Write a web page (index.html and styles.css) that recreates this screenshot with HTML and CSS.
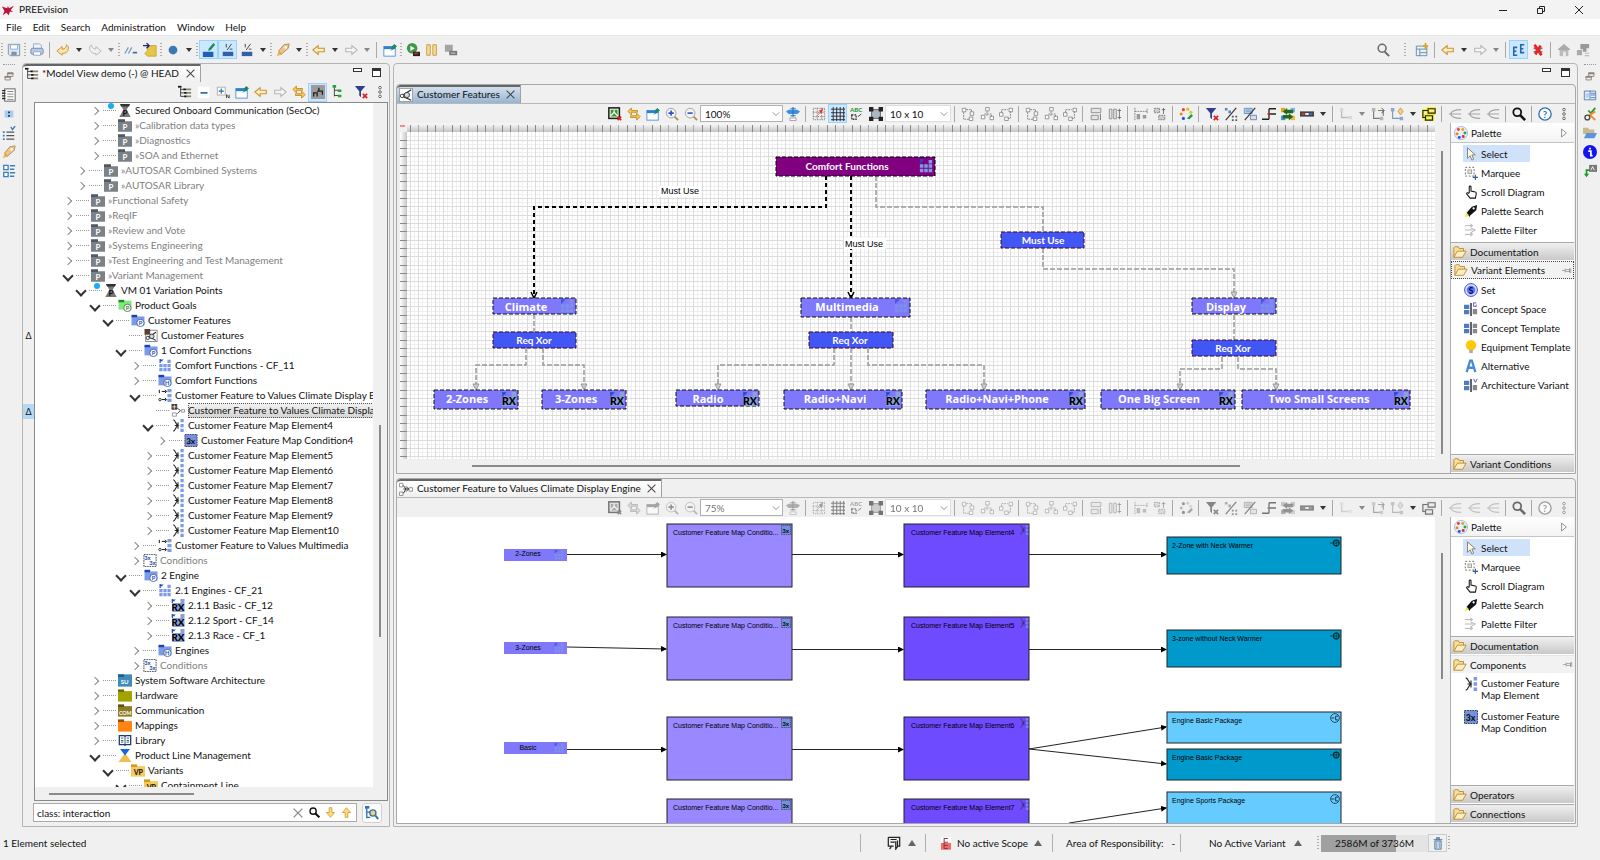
FILE: index.html
```html
<!DOCTYPE html>
<html lang="en">
<head>
    <meta charset="UTF-8">
    <meta name="viewport" content="width=device-width, initial-scale=1.0">
    <title>PREEvision</title>
    <link rel="stylesheet" href="styles.css">
</head>
<body>
    <!-- Icon sprite -->
    <svg class="sprite" aria-hidden="true">
        <symbol id="logo" viewBox="0 0 16 16"><path d="M1 4l6 2 1-3 1 3 6-3-4 5 3 2-4 0-1 4-3-3-4 3 2-5z" fill="#b8143c"/></symbol>
        <symbol id="save" viewBox="0 0 16 16"><path d="M1.5 1.5h13v13h-11l-2-2z" fill="#dbe7f2" stroke="#6f8fae"/><path d="M4 2h8v5H4z" fill="#fff" stroke="#8aa6c0"/><path d="M5 10h6v4H5z" fill="#7d93a8"/></symbol>
        <symbol id="print" viewBox="0 0 16 16"><path d="M4 1h7l2 2v4H4z" fill="#eef4fb" stroke="#8ba2c4"/><rect x="1" y="6" width="14" height="7" rx="2" fill="#b9cbe3" stroke="#6c86ad"/><path d="M4 10h8v4H4z" fill="#fff" stroke="#8ba2c4"/></symbol>
        <symbol id="undo" viewBox="0 0 16 16"><path d="M1 9l6-5v3c3 0 5-2 5-5l2 2c1 5-2 8-7 8v2z" fill="#fbe3ae" stroke="#c98a2b"/></symbol>
        <symbol id="redo" viewBox="0 0 16 16"><path d="M15 9L9 4v3C6 7 4 5 4 2L2 4c-1 5 2 8 7 8v2z" fill="#f1f1f1" stroke="#b3b3b3"/></symbol>
        <symbol id="slashes" viewBox="0 0 16 16"><path d="M1 12l4-7M5 12l4-7" stroke="#7d9cc0" stroke-width="1.5"/><path d="M10 11h5" stroke="#3c6fae" stroke-width="2"/></symbol>
        <symbol id="import" viewBox="0 0 16 16"><path d="M5 3h10v12H5l-3-3 3-3z" fill="#e3c64a" stroke="#c8a62b"/><path d="M0 3h6M4 0l3 3-3 3" stroke="#23238c" stroke-width="1.5" fill="none"/></symbol>
        <symbol id="dot" viewBox="0 0 16 16"><circle cx="8" cy="8" r="5" fill="#3b78b5"/></symbol>
        <symbol id="pen" viewBox="0 0 16 16"><rect x="1" y="10" width="12" height="6" fill="#1f5fb8"/><path d="M7 9l1-3 5-6 2 2-5 6z" fill="#1d8a62"/></symbol>
        <symbol id="frac" viewBox="0 0 16 16"><rect x="2" y="10" width="12" height="5" fill="#2f62ab"/><path d="M6 1v4M12 1L7 8M10 7h3" stroke="#333"/></symbol>
        <symbol id="rocket" viewBox="0 0 16 16"><path d="M1 15l2-6 3 4z" fill="#f2b24c"/><path d="M3 9l6-7 6-1-1 5-8 7z" fill="#e9c48b" stroke="#b58a4a"/><circle cx="11" cy="5" r="1.5" fill="#fff"/></symbol>
        <symbol id="back" viewBox="0 0 16 16"><path d="M1 8l6-5v3h7v4H7v3z" fill="#fdf0c8" stroke="#cc9430" stroke-width="1.3"/></symbol>
        <symbol id="fwd" viewBox="0 0 16 16"><path d="M15 8L9 3v3H2v4h7v3z" fill="#f7f7f7" stroke="#b5b5b5" stroke-width="1.2"/></symbol>
        <symbol id="pinwin" viewBox="0 0 16 16"><rect x="1" y="4" width="13" height="11" fill="#fff" stroke="#4b8fd0"/><path d="M1 4h13v3H1z" fill="#2c7fd4"/><path d="M8 9l3-3-1-2 3-3 3 3-3 2-1 1z" fill="#1c8a5c"/></symbol>
        <symbol id="run" viewBox="0 0 16 16"><circle cx="7" cy="6" r="6" fill="#3c9a46"/><path d="M5 3l5 3-5 3z" fill="#fff"/><rect x="8" y="10" width="8" height="5" fill="#222"/><rect x="9" y="11" width="5" height="2" fill="#c62828"/></symbol>
        <symbol id="pause" viewBox="0 0 16 16"><path d="M2 2h4v12H2zM9 2h4v12H9z" fill="#f7dc96" stroke="#c79632"/></symbol>
        <symbol id="stop" viewBox="0 0 16 16"><rect x="1" y="2" width="9" height="8" fill="#a3a3a3"/><rect x="6" y="9" width="9" height="5" fill="#777"/><rect x="8" y="11" width="5" height="1" fill="#ddd"/></symbol>
        <symbol id="search" viewBox="0 0 16 16"><circle cx="7" cy="6" r="4.5" fill="none" stroke="#6b6b6b" stroke-width="1.8"/><path d="M10 10l5 5" stroke="#6b6b6b" stroke-width="2.2"/></symbol>
        <symbol id="find" viewBox="0 0 16 16"><circle cx="6" cy="6" r="4.5" fill="none" stroke="#111" stroke-width="2"/><path d="M9 9l6 6" stroke="#111" stroke-width="3"/></symbol>
        <symbol id="persp" viewBox="0 0 16 16"><path d="M1.5 3.5h12v11h-12zM1.5 7h12M5.5 7v8M5.5 11h8" fill="#e9f1f8" stroke="#5f87a8"/><path d="M12 0v7M9 3.500h6" stroke="#dca32a" stroke-width="2"/></symbol>
        <symbol id="ee" viewBox="0 0 16 16"><path d="M6 5H2v9h4M2 9.500h3M14 2h-4v9h4M10 6.500h3" fill="none" stroke="#2467b0" stroke-width="1.800"/></symbol>
        <symbol id="nox" viewBox="0 0 16 16"><path d="M3 6h10M3 10h10M6 3v10M10 3v10" stroke="#777" stroke-width="2"/><path d="M4 2l8 12M11 3L5 13" stroke="#f02020" stroke-width="3"/></symbol>
        <symbol id="home" viewBox="0 0 16 16"><path d="M1 7l7-6 7 6v1H1z" fill="#aaa"/><path d="M3 8h10v7H3z" fill="#bbb"/><path d="M7 10h3v5H7z" fill="#eee"/></symbol>
        <symbol id="blocks" viewBox="0 0 16 16"><path d="M5 1h10v5h-3v4H8V7H5z" fill="#999"/><path d="M1 8h6v6H1zM10 11h5v1h-5zM10 14h5v1h-5z" fill="#aaa"/></symbol>
        <symbol id="restore" viewBox="0 0 16 16"><path d="M6.500 4.500h6v4h-6zM3.500 8.500h6v4h-6z" fill="#eee" stroke="#8a8278"/><path d="M6 4h7v2H6zM3 8h7v2H3z" fill="#8a8278"/></symbol>
        <symbol id="notes" viewBox="0 0 16 16"><rect x="3" y="1" width="12" height="14" fill="#fff" stroke="#555"/><path d="M6 4h7M6 7h7M6 10h7M6 13h7" stroke="#777"/><path d="M0 3h4M0 6h4M0 9h4M0 12h4" stroke="#333" stroke-width="1.5"/></symbol>
        <symbol id="pair" viewBox="0 0 16 16"><path d="M3 4h10v8H3z" fill="#a9cdf0"/><path d="M7 5h2v2H7zM7 9h2v2H7z" fill="#234"/></symbol>
        <symbol id="checks" viewBox="0 0 16 16"><path d="M1 6h2v2H1zM1 10h2v2H1zM1 14h2v2H1z" fill="#367ac2"/><path d="M5 7h9M5 11h9M5 15h9" stroke="#555" stroke-width="1.5"/><path d="M10 1l2 3 3-4" fill="none" stroke="#367ac2" stroke-width="1.5"/></symbol>
        <symbol id="props" viewBox="0 0 16 16"><path d="M2 1.500h5v5H2zM2 9.500h5v5H2z" fill="#fff" stroke="#3a7fbf" stroke-width="1.5"/><path d="M9 2h6M9 6h5M9 10h6M9 14h5" stroke="#3a7fbf" stroke-width="1.5"/></symbol>
        <symbol id="table" viewBox="0 0 16 16"><path d="M1.500 3.500h13v10h-13zM8 3v10" fill="#e8f0fa" stroke="#5177b2"/><path d="M3 6h4v5H3z" fill="#b9cdea"/><path d="M9 6h5M9 8h5M9 11h5" stroke="#5177b2"/></symbol>
        <symbol id="verify" viewBox="0 0 16 16"><path d="M6 4l3 3 5-6" fill="none" stroke="#1d9b3a" stroke-width="2"/><path d="M14 5L8 9l6 6" fill="none" stroke="#f08a24" stroke-width="2.200"/><circle cx="5" cy="12" r="2.800" fill="none" stroke="#444" stroke-width="1.5"/></symbol>
        <symbol id="files" viewBox="0 0 16 16"><path d="M0 2h6l1 2h6v5H0z" fill="#c9b98c"/><path d="M4 8h12l-3 6H1z" fill="#5b93dd"/></symbol>
        <symbol id="info" viewBox="0 0 16 16"><circle cx="8" cy="8" r="8" fill="#1414f0"/><path d="M6 7h3v5h2M8 3v2" fill="none" stroke="#fff" stroke-width="2"/></symbol>
        <symbol id="trace" viewBox="0 0 16 16"><rect x="7" y="1" width="9" height="8" fill="#777"/><path d="M9 7l2-4 2 4" stroke="#fff" fill="none"/><path d="M8 7H4v5" fill="none" stroke="#1c9a2c" stroke-width="2"/><path d="M1 11h6l-3 4z" fill="#1c9a2c"/></symbol>
        <symbol id="hier" viewBox="0 0 16 16"><path d="M0 1h4v2H0z" fill="#111"/><path d="M3 3v10M3 5h3M3 9h4M3 13h4" fill="none" stroke="#333"/><path d="M6 4h3v2H6zM7 8h3v2H7zM7 12h3v2H7z" fill="#111"/><path d="M9 5h6M10 9h5M10 13h5" stroke="#8a8470" stroke-width="2"/></symbol>
        <symbol id="collapse" viewBox="0 0 16 16"><rect x="1" y="2" width="13" height="13" fill="#fff"/><path d="M4 9h8" stroke="#2b6fa8" stroke-width="2"/></symbol>
        <symbol id="expand" viewBox="0 0 16 16"><rect x="1.5" y="2.5" width="9" height="9" fill="#fff" stroke="#aaa"/><path d="M3 7h6M6 4v6" stroke="#2b6fa8" stroke-width="1.3"/><path d="M12 15v-4l3 4v-4" fill="none" stroke="#333"/></symbol>
        <symbol id="sync" viewBox="0 0 16 16"><path d="M1 5l4-4v3h7v2H5v3z" fill="#f6c85e" stroke="#c48a22"/><path d="M15 11l-4-4v3H4v2h7v3z" fill="#f6c85e" stroke="#c48a22"/></symbol>
        <symbol id="flat" viewBox="0 0 16 16"><rect width="16" height="16" fill="#9b9b9b"/><path d="M3 13V9h4v4M9 7V3M7 7h6v4" fill="none" stroke="#222" stroke-width="1.5"/></symbol>
        <symbol id="greentree" viewBox="0 0 16 16"><path d="M5 2v11M5 6h5M5 12h5" fill="none" stroke="#333"/><path d="M3 0h4v3H3zM9 5h4v3H9zM9 11h4v3H9z" fill="#20a838"/></symbol>
        <symbol id="filter" viewBox="0 0 16 16"><path d="M1 1h12L8 7v7l-2-2V7z" fill="#2e3f8f"/><path d="M10 10l5 5M15 10l-5 5" stroke="#e21b1b" stroke-width="2"/></symbol>
        <symbol id="kebab" viewBox="0 0 16 16"><g fill="#fff" stroke="#555"><circle cx="8" cy="3" r="1.5"/><circle cx="8" cy="8" r="1.5"/><circle cx="8" cy="13" r="1.5"/></g></symbol>
        <symbol id="export" viewBox="0 0 16 16"><rect x="1" y="1" width="12" height="12" fill="#fff" stroke="#222" stroke-width="1.800"/><path d="M3 3h8v8H3z" fill="#3c9a30"/><path d="M3 10l4-4 4 4M7 3v3" fill="none" stroke="#fff" stroke-width="1.300"/><path d="M11 11l4 4M15 11l-4 4" stroke="#e21b1b" stroke-width="1.800"/></symbol>
        <symbol id="zin" viewBox="0 0 16 16"><circle cx="7" cy="7" r="5.5" fill="#f0f4fb" stroke="#9a9a9a"/><path d="M4 7h6M7 4v6" stroke="#2f50c0" stroke-width="1.8"/><path d="M11 11l4 4" stroke="#b0885a" stroke-width="2"/></symbol>
        <symbol id="zout" viewBox="0 0 16 16"><circle cx="7" cy="7" r="5.5" fill="#f0f4fb" stroke="#9a9a9a"/><path d="M4 7h6" stroke="#2f50c0" stroke-width="1.8"/><path d="M11 11l4 4" stroke="#b0885a" stroke-width="2"/></symbol>
        <symbol id="fit" viewBox="0 0 16 16"><path d="M0 5l3-2h10l3 2-3 3H3z" fill="#3f8fdd"/><path d="M8 0v11M5 2h6M5 10h6" stroke="#2c72c0" stroke-width="1.3"/><path d="M4.500 12.500h7v3h-7z" fill="#fff" stroke="#999"/></symbol>
        <symbol id="snap" viewBox="0 0 16 16"><path d="M1.500 1.500h13v13h-13zM6 1v14M11 1v14M1 6h14M1 11h14" fill="none" stroke="#666" stroke-dasharray="1 1"/><path d="M4 12l5-6-1-2 5-2-2 5-2 0z" fill="#ee3a2a"/></symbol>
        <symbol id="gridic" viewBox="0 0 16 16"><path d="M2.500 0v16M6.500 0v16M10.500 0v16M14.500 0v16M0 2.500h16M0 6.500h16M0 10.500h16M0 14.500h16" stroke="#222"/></symbol>
        <symbol id="abc" viewBox="0 0 16 16"><text x="0" y="6" font-size="7" font-weight="700" fill="#18902a">ABC</text><path d="M2 9h5v5H2z" fill="none" stroke="#333" stroke-width="1.5" stroke-dasharray="2 1"/><path d="M9 11l4-3" stroke="#333"/></symbol>
        <symbol id="resize" viewBox="0 0 16 16"><path d="M3 3h10v10H3z" fill="#aab8c4" stroke="#555"/><path d="M0 0h5v5H0zM11 0h5v5h-5zM0 11h5v5H0zM11 11h5v5h-5z" fill="#222"/></symbol>
        <symbol id="al1" viewBox="0 0 16 16"><path d="M1.500 1.500h4v4h-4zM10.500 5.500h4v4h-4zM9.500 11.500h4v4h-4z" fill="#fff" stroke="#888"/><path d="M3 6v8h6M6 3h6v3" fill="none" stroke="#777" stroke-dasharray="2 1"/></symbol>
        <symbol id="al2" viewBox="0 0 16 16"><path d="M6.500 .5h4v4h-4zM1.500 9.500h4v4h-4zM11.500 10.500h4v4h-4z" fill="#fff" stroke="#888"/><path d="M8 5v6M5 8h8v3" fill="none" stroke="#777" stroke-dasharray="2 1"/></symbol>
        <symbol id="al3" viewBox="0 0 16 16"><path d="M11.500 1.500h4v4h-4zM.5 6.500h4v4h-4zM6.500 11.500h4v4h-4z" fill="#fff" stroke="#888"/><path d="M13 5v8h-3M3 6V3h7" fill="none" stroke="#777" stroke-dasharray="2 1"/></symbol>
        <symbol id="rows" viewBox="0 0 16 16"><path d="M2.500 1.500h11v5h-11zM2.500 9.500h8v5h-8z" fill="#e4e4e4" stroke="#888"/><path d="M13 8v7" stroke="#666"/></symbol>
        <symbol id="cols" viewBox="0 0 16 16"><path d="M1.500 2.500h3v11h-3zM6.500 2.500h3v11h-3z" fill="#e4e4e4" stroke="#888"/><path d="M13 2v12M11 4h4M11 12h4" stroke="#666"/></symbol>
        <symbol id="sizeh" viewBox="0 0 16 16"><path d="M1 1v14M1 5h14M15 2v6" fill="none" stroke="#777" stroke-dasharray="2 1"/><path d="M3 8h4v6H3zM10 9h4v4h-4z" fill="#999"/></symbol>
        <symbol id="sizev" viewBox="0 0 16 16"><path d="M1.500 1.500h6v5h-6zM6.500 9.500h7v5h-7z" fill="#ccc" stroke="#777" stroke-dasharray="2 1"/><path d="M12 1v7M10 3h4" stroke="#666"/></symbol>
        <symbol id="colors" viewBox="0 0 16 16"><circle cx="5" cy="3" r="1.8" fill="#e8442c"/><circle cx="10" cy="2.5" r="1.8" fill="#f3b71e"/><circle cx="2.5" cy="8" r="1.8" fill="#f08a1d"/><circle cx="5" cy="13" r="1.8" fill="#2b50d8"/><circle cx="13.5" cy="6" r="1.8" fill="#c8d422"/><path d="M9 13l5-5 2 2-4 4z" fill="#1b9b50"/></symbol>
        <symbol id="pct" viewBox="0 0 16 16"><path d="M2 15L14 1" stroke="#333" stroke-width="1.3"/><path d="M1 1h3v3H1zM5 4h3v3H5z" fill="#5d82c0"/><path d="M9 10h2v2H9zM13 10h2v2h-2zM9 14h2v2H9zM13 14h2v2h-2z" fill="#555"/></symbol>
        <symbol id="pct2" viewBox="0 0 16 16"><path d="M1.500 1.500h9v6h-9zM3 3.500h6M3 5.500h6" fill="#cfe0f6" stroke="#5d82c0"/><path d="M8.500 9.500h7v5h-7z" fill="#ddd" stroke="#5d82c0"/><path d="M2 15L14 1" stroke="#333" stroke-width="1.3"/></symbol>
        <symbol id="branch" viewBox="0 0 16 16"><path d="M8 2h8M8 2v12M0 14h8M8 8h8" fill="none" stroke="#222" stroke-width="1.5"/><path d="M6 8h4" stroke="#e22" stroke-width="1.5"/></symbol>
        <symbol id="swap" viewBox="0 0 16 16"><path d="M0 1h5v5H0z" fill="#e8a31c"/><path d="M11 1h5v5h-5z" fill="#7bb7ea"/><path d="M0 10h5v5H0z" fill="#4a8fd6"/><path d="M11 10h5v5h-5z" fill="#f0b93a"/><path d="M2 5l5-4v2h7v4H7v2zM14 11l-5 4v-2H2V9h7V7z" fill="#1f6b1f"/></symbol>
        <symbol id="ruler3" viewBox="0 0 16 16"><path d="M0 5h16v6H0z" fill="#444"/><path d="M2 7h3v2H2z" fill="#e33"/><path d="M6 7h4v2H6z" fill="#fff"/><path d="M11 7h3v2h-3z" fill="#3a6fd8"/></symbol>
        <symbol id="route" viewBox="0 0 16 16"><path d="M3 3v9h8" fill="none" stroke="#bbb" stroke-width="1.5"/><path d="M1 1h4v4H1zM11 10h4v4h-4z" fill="#d3d9e0"/></symbol>
        <symbol id="route2" viewBox="0 0 16 16"><path d="M3 3v10h7M8 4h6v6" fill="none" stroke="#777" stroke-width="1.3"/><path d="M1 1h4v4H1zM10 11h4v4h-4z" fill="#b5b5b5"/><path d="M12 1l3 3-3 3" fill="none" stroke="#444"/></symbol>
        <symbol id="route3" viewBox="0 0 16 16"><path d="M3 3v10h8" fill="none" stroke="#7f95bb" stroke-width="1.3"/><path d="M1 1h4v4H1zM11 11h4v4h-4z" fill="#8fa8d0"/><path d="M12 1l3 4-3 4-3-4z" fill="#f0ce8b" stroke="#c89b42"/></symbol>
        <symbol id="yel" viewBox="0 0 16 16"><path d="M7 2h8v5H7zM4 10h8v5H4zM4 12H1V4h6" fill="none" stroke="#f4ee14" stroke-width="3.5"/><path d="M7 2h8v5H7zM4 10h8v5H4zM4 12H1V4h6" fill="none" stroke="#222" stroke-width="1.3"/></symbol>
        <symbol id="fan" viewBox="0 0 16 16"><path d="M1 8h14M3 8c1-4 5-5 12-5M3 8c1 4 5 5 12 5" fill="none" stroke="#a5a5a5" stroke-width="1.3"/></symbol>
        <symbol id="help" viewBox="0 0 16 16"><circle cx="8" cy="8" r="7" fill="#fff" stroke="#2f6fb5" stroke-width="1.5"/><text x="8" y="12" font-size="11" font-weight="700" text-anchor="middle" fill="#2f6fb5">?</text></symbol>
        <symbol id="chev" viewBox="0 0 10 10"><path d="M1 3l4 4 4-4" fill="none" stroke="#777"/></symbol>
        <symbol id="hide" viewBox="0 0 10 12"><path d="M2 1l6 5-6 5z" fill="#fff" stroke="#777"/></symbol>
        <!-- tree and palette icons -->
        <symbol id="pkg" viewBox="0 0 16 14"><path d="M0 0h8v2h8v12H0z" fill="#7b8287"/><path d="M0 0h8v3H0z" fill="#53595e"/><text x="5" y="12" font-size="9" font-weight="700" fill="#fff">P</text></symbol>
        <symbol id="vpoint" viewBox="0 0 16 16"><path d="M2 0h12l-4 7 5 9H1l5-9z" fill="#777"/><path d="M2 0h12l-1 3H3z" fill="#333"/><text x="5" y="15" font-size="10" font-weight="700" fill="#111">P</text></symbol>
        <symbol id="goals" viewBox="0 0 16 16"><path d="M0 2h16v11H0z" fill="#7bea7b"/><path d="M0 1h7v3H0z" fill="#158a1d"/><circle cx="11" cy="11" r="4.5" fill="#fff" stroke="#555"/><text x="9" y="14" font-size="7" font-weight="700" fill="#158a1d">P</text></symbol>
        <symbol id="bfold" viewBox="0 0 16 16"><path d="M0 3h16v11H0z" fill="#7c9ae8"/><path d="M0 1h7v3H0z" fill="#1c44a8"/><circle cx="11" cy="11" r="4.5" fill="#fff" stroke="#33519b"/><text x="9" y="14" font-size="7" font-weight="700" fill="#2048b8">P</text></symbol>
        <symbol id="hfold" viewBox="0 0 16 16"><path d="M0 3h16v11H0z" fill="#7c9ae8"/><path d="M0 1h7v3H0z" fill="#1c44a8"/><circle cx="11" cy="11" r="4.5" fill="#fff" stroke="#33519b"/><text x="8" y="14" font-size="7" font-weight="700" fill="#2048b8">H</text></symbol>
        <symbol id="fdiag" viewBox="0 0 16 16"><rect x="1.5" y="1.5" width="14" height="14" fill="#fff" stroke="#777"/><path d="M0 0h7v7H0z" fill="#5a4030"/><path d="M4 11l10-7M4 9l10 5" stroke="#222" stroke-width="1.300"/><circle cx="4" cy="11" r="2" fill="#fff" stroke="#222"/><circle cx="9" cy="9" r="2.800" fill="#cde" stroke="#222"/></symbol>
        <symbol id="fdiag2" viewBox="0 0 16 16"><rect x=".5" y=".5" width="15" height="15" fill="#fff" stroke="#999"/><path d="M14 2L3 9l11 5" fill="none" stroke="#333" stroke-width="1.500"/><circle cx="3.500" cy="9" r="2" fill="#fff" stroke="#333"/><circle cx="9" cy="8" r="3" fill="#cde" stroke="#333"/></symbol>
        <symbol id="fgrid" viewBox="0 0 16 16"><path d="M1 6h4v4H1zM6 6h4v4H6zM11 6h4v4h-4zM1 11h4v4H1zM6 11h4v4H6zM11 11h4v4h-4zM11 1h4v4h-4z" fill="#7d9ae6"/><path d="M2 5V0h4M2 2h3" fill="none" stroke="#1b49c8" stroke-width="1.5"/></symbol>
        <symbol id="fmap" viewBox="0 0 16 16"><path d="M11 0h5v4h-5zM11 6h5v4h-5zM11 12h5v4h-5z" fill="#7d9ae6"/><path d="M1 1v4M4 3h5M4 13h5M8 1l2 2-2 2M8 11l2 2-2 2" fill="none" stroke="#111" stroke-width="1.2"/><circle cx="1.8" cy="13" r="1.5" fill="none" stroke="#111"/></symbol>
        <symbol id="mdiag" viewBox="0 0 16 16"><path d="M0 0h7v7H0z" fill="#4d3a2c"/><path d="M3.500 1v5M1 3.500h5" stroke="#eee"/><path d="M1 11h5v4H1zM12 7h4v3h-4z" fill="#fff" stroke="#888"/><path d="M7 5l4 3-4 4" fill="none" stroke="#222"/></symbol>
        <symbol id="mdiag2" viewBox="0 0 16 16"><path d="M.5 1.500h4v4h-4zM.5 11.500h4v4h-4zM11.500 6.500h4v4h-4z" fill="#fff" stroke="#888"/><path d="M5 4l3 4-3 5M5 8h6M8 5l3 3-3 3" fill="none" stroke="#222"/></symbol>
        <symbol id="elem" viewBox="0 0 16 16"><path d="M2 1c3 0 3 6 6 7-3 1-3 7-6 7M4 8h4M8 4v8" fill="none" stroke="#222" stroke-width="1.3"/><path d="M11 0h4v4h-4zM11 6h4v4h-4zM11 12h4v4h-4z" fill="#7d9ae6"/></symbol>
        <symbol id="cond" viewBox="0 0 16 16"><rect x=".5" y=".5" width="15" height="15" fill="#7391de" stroke="#223" stroke-dasharray="2 1"/><text x="2" y="12" font-size="10" font-weight="900" fill="#111">3x</text></symbol>
        <symbol id="conds" viewBox="0 0 16 16"><rect x=".5" y=".5" width="15" height="15" fill="#fff" stroke="#223" stroke-dasharray="2 1"/><text x="1" y="7" font-size="7" font-weight="900" fill="#2c56b8">3x</text><text x="7" y="14" font-size="7" font-weight="900" fill="#2c56b8">3x</text></symbol>
        <symbol id="rx" viewBox="0 0 16 16"><path d="M11 0h5v16H1V5h10z" fill="#8aa0d8"/><path d="M1 5V0h4M1 2h3" fill="none" stroke="#1b49c8" stroke-width="1.5"/><text x="0" y="15" font-size="12" font-weight="900" fill="#000">RX</text></symbol>
        <symbol id="su" viewBox="0 0 16 14"><path d="M0 0h16v14H0z" fill="#3f8cba"/><path d="M0 0h7v3H0z" fill="#1d5f8a"/><text x="3" y="11" font-size="7" font-weight="700" fill="#fff">SU</text></symbol>
        <symbol id="hw" viewBox="0 0 16 14"><path d="M0 2h16v12H0z" fill="#a3a300"/><path d="M0 0h7v3H0z" fill="#6e6e00"/></symbol>
        <symbol id="com" viewBox="0 0 16 14"><path d="M0 2h16v12H0z" fill="#8f7b24"/><path d="M0 0h7v3H0z" fill="#5f5114"/><text x="1" y="12" font-size="6" font-weight="700" fill="#fff">COM</text></symbol>
        <symbol id="maps" viewBox="0 0 16 14"><path d="M0 2h16v12H0z" fill="#ff8412"/><path d="M0 0h7v3H0z" fill="#9c4c00"/></symbol>
        <symbol id="lib" viewBox="0 0 16 16"><path d="M1 2h6l1 1 1-1h6v11H9l-1 1-1-1H1z" fill="#fff" stroke="#173f70" stroke-width="1.6"/><path d="M8 3v10M10 5h3M10 8h3M10 10h3M3 5h3M3 8h3M3 10h3" stroke="#173f70"/></symbol>
        <symbol id="plm" viewBox="0 0 16 16"><path d="M8 5l8 11H0z" fill="#efbc55"/><path d="M2 0h12L8 8z" fill="#1764e0"/></symbol>
        <symbol id="vp" viewBox="0 0 16 14"><path d="M0 2h16v12H0z" fill="#f5cb5e"/><path d="M0 0h7v3H0z" fill="#d59a16"/><text x="3" y="12" font-size="8" font-weight="900" fill="#222">VP</text></symbol>
        <symbol id="clear" viewBox="0 0 16 16"><path d="M3 3l10 10M13 3L3 13" stroke="#888" stroke-width="1.5"/></symbol>
        <symbol id="down" viewBox="0 0 16 16"><path d="M6 1h4v7h4l-6 7-6-7h4z" fill="#fbdc7c" stroke="#c98a1b"/></symbol>
        <symbol id="up" viewBox="0 0 16 16"><path d="M6 15h4V8h4L8 1 2 8h4z" fill="#fbdc7c" stroke="#c98a1b"/></symbol>
        <symbol id="treefind" viewBox="0 0 16 16"><path d="M2 2v12M2 13h4M2 7h4" fill="none" stroke="#2f6fc0" stroke-width="1.5"/><path d="M0 0h5v3H0z" fill="#2f6fc0"/><circle cx="9" cy="8" r="3.5" fill="#f6d45c" stroke="#2f6fc0" stroke-width="1.5"/><path d="M12 11l3 4" stroke="#2f6fc0" stroke-width="2.2"/></symbol>
        <symbol id="palic" viewBox="0 0 16 16"><circle cx="8" cy="8" r="7.5" fill="#e8f0fa" stroke="#9fb7dc"/><circle cx="5" cy="4" r="1.7" fill="#e8442c"/><circle cx="10" cy="4" r="1.7" fill="#e8a31c"/><circle cx="3.5" cy="9" r="1.7" fill="#e8841c"/><circle cx="12.5" cy="8" r="1.7" fill="#2aa84a"/><circle cx="6" cy="13" r="1.7" fill="#2b50d8"/><circle cx="10.5" cy="12" r="1.7" fill="#c33"/></symbol>
        <symbol id="cursor" viewBox="0 0 16 16"><path d="M4 1v12l3-3 2 5 2-1-2-5h4z" fill="#fffbe0" stroke="#777"/></symbol>
        <symbol id="marq" viewBox="0 0 16 16"><rect x="1.5" y="1.5" width="10" height="10" fill="none" stroke="#555" stroke-dasharray="2 2"/><rect x="4.5" y="4.5" width="4" height="4" fill="#f0e8c0" stroke="#999"/><path d="M13 10v6M10 13h6" stroke="#35598c" stroke-width="1.3"/></symbol>
        <symbol id="hand" viewBox="0 0 16 16"><path d="M6 9V2c0-1 2-1 2 0v5l5 1c1 0 1 1 1 2l-1 5H7L3 10c0-1 1-2 3 0" fill="#fff" stroke="#111" stroke-width="1.2"/></symbol>
        <symbol id="prock" viewBox="0 0 16 16"><path d="M1 15l2-5 3 3z" fill="#f4e62c"/><path d="M3 10l6-7 6-2-1 6-7 6-1 2-1-3z" fill="#111"/><circle cx="11" cy="5" r="1.3" fill="#fff"/></symbol>
        <symbol id="pfilt" viewBox="0 0 16 16"><path d="M1 3h8M1 8h9M1 13h8M7 1l3 2-3 2M8 6l5 2-5 3M7 11l3 2-3 2" fill="none" stroke="#aaa"/></symbol>
        <symbol id="fold" viewBox="0 0 16 14"><path d="M1 13V2l1-1h4l1 2h5v3" fill="#f8dfa0" stroke="#bb8628"/><path d="M1 13l4-7h10l-4 7z" fill="#fdeec4" stroke="#bb8628"/></symbol>
        <symbol id="pin" viewBox="0 0 16 10"><path d="M0 5h5M5 2v6M5 3.500h7v3H5M12 2v6h2V2z" fill="none" stroke="#8a8270"/></symbol>
        <symbol id="set" viewBox="0 0 16 16"><circle cx="8" cy="8" r="7.3" fill="#dfe6ff" stroke="#2929e0"/><circle cx="8" cy="8" r="5" fill="#5a7ae8"/><text x="8" y="12" font-size="10" font-weight="900" text-anchor="middle" fill="#0a0a78">S</text></symbol>
        <symbol id="cspace" viewBox="0 0 16 16"><path d="M0 3h6v5H0zM0 9h6v5H0z" fill="#4f79c4"/><path d="M8 1v15" stroke="#111" stroke-width="1.5"/><path d="M10 8h5v6h-5z" fill="#888"/><path d="M14 1h-3v4h3V3" fill="none" stroke="#5a35c8"/></symbol>
        <symbol id="ctemp" viewBox="0 0 16 16"><path d="M0 3h6v5H0zM0 9h6v5H0z" fill="#4f79c4"/><path d="M8 1v15" stroke="#111" stroke-width="1.5"/><path d="M10 3h5v5h-5zM10 9h5v5h-5z" fill="#888"/></symbol>
        <symbol id="avar" viewBox="0 0 16 16"><path d="M0 3h6v5H0zM0 9h6v5H0z" fill="#4f79c4"/><path d="M8 1v15" stroke="#111" stroke-width="1.5"/><path d="M10 8h5v6h-5z" fill="#888"/><path d="M11 1l2 4 2-4" fill="none" stroke="#5a35c8"/></symbol>
        <symbol id="bulb" viewBox="0 0 16 16"><circle cx="8" cy="6" r="6" fill="#ffc90a"/><path d="M6 11h4v4H6z" fill="#aaa"/></symbol>
        <symbol id="alt" viewBox="0 0 16 16"><path d="M3 15L7 2h2l4 13M5 10h6" fill="none" stroke="#4a88dc" stroke-width="2.6"/></symbol>
        <symbol id="xor" viewBox="0 0 16 16"><circle cx="10" cy="8" r="4.5" fill="none" stroke="#033" stroke-width="2"/><path d="M0 8h5M10 2v12M5 8h10" stroke="#033" stroke-width="1.3"/></symbol>
        <symbol id="pc" viewBox="0 0 16 16"><circle cx="8" cy="8" r="7" fill="none" stroke="#134" stroke-width="1.3"/><path d="M2 8h5M13 5H9v6h4" fill="none" stroke="#134" stroke-width="1.5"/></symbol>
        <symbol id="scope" viewBox="0 0 16 20"><rect width="16" height="20" fill="#fff"/><path d="M0 9h16v11H0z" fill="#f26b6b"/><path d="M5 1v17M5 2h6M5 8h6M5 13h6M5 18h6" fill="none" stroke="#833" stroke-width="1.5"/></symbol>
        <symbol id="msg" viewBox="0 0 16 16"><path d="M1.500 1.500h13v10h-2M1.500 1.500v10h6" fill="none" stroke="#222" stroke-width="1.4"/><path d="M4 4h7M4 7h5M5 12l-2 3M12 5v7l-2 3V6" fill="none" stroke="#222" stroke-width="1.4"/></symbol>
        <symbol id="trash" viewBox="0 0 16 20"><path d="M1 4h14M6 4V1h4v3" fill="none" stroke="#49729f" stroke-width="1.8"/><path d="M3 6h10v13H3z" fill="#d5e2f1" stroke="#49729f" stroke-width="1.5"/><path d="M6 8v9M10 8v9" stroke="#49729f"/></symbol>
    </svg>

    <header class="titlebar">
        <svg class="i"><use href="#logo"/></svg>
        <span class="title">PREEvision</span>
        <div class="window-buttons">
            <button aria-label="Minimize"><svg viewBox="0 0 10 10"><path d="M1 5.500h8" stroke="#222"/></svg></button>
            <button aria-label="Restore"><svg viewBox="0 0 10 10"><path d="M1.500 3.500h5v5h-5zM3.500 3V1.500h5v5H7" fill="none" stroke="#222"/></svg></button>
            <button aria-label="Close"><svg viewBox="0 0 10 10"><path d="M1 1l8 8M9 1L1 9" stroke="#222"/></svg></button>
        </div>
    </header>
    <nav class="menubar">
        <button>File</button><button>Edit</button><button>Search</button><button>Administration</button><button>Window</button><button>Help</button>
    </nav>

    <div class="toolbar main-toolbar">
        <i class="grip"></i>
        <button title="Save"><svg class="i"><use href="#save"/></svg></button>
        <i class="grip"></i>
        <button title="Print"><svg class="i"><use href="#print"/></svg></button>
        <i class="sep"></i>
        <button title="Undo"><svg class="i"><use href="#undo"/></svg></button><button class="dd" title="Undo history"></button>
        <button title="Redo"><svg class="i"><use href="#redo"/></svg></button><button class="dd dim" title="Redo history"></button>
        <i class="grip"></i>
        <button title="Comments"><svg class="i"><use href="#slashes"/></svg></button>
        <button title="Import"><svg class="i"><use href="#import"/></svg></button>
        <i class="grip"></i>
        <button title="State"><svg class="i"><use href="#dot"/></svg></button><button class="dd" title="State menu"></button>
        <i class="grip"></i>
        <button class="on" title="Highlight"><svg class="i"><use href="#pen"/></svg></button>
        <button class="on" title="Variants"><svg class="i"><use href="#frac"/></svg></button>
        <button title="Variant view"><svg class="i"><use href="#frac"/></svg></button><button class="dd" title="Variant menu"></button>
        <i class="grip"></i>
        <button title="Launch"><svg class="i"><use href="#rocket"/></svg></button><button class="dd" title="Launch menu"></button>
        <i class="grip"></i>
        <button title="Back"><svg class="i"><use href="#back"/></svg></button><button class="dd" title="Back history"></button>
        <button title="Forward"><svg class="i"><use href="#fwd"/></svg></button><button class="dd dim" title="Forward history"></button>
        <i class="sep"></i>
        <button title="Pin"><svg class="i"><use href="#pinwin"/></svg></button>
        <i class="grip"></i>
        <button title="Run"><svg class="i"><use href="#run"/></svg></button>
        <button title="Pause"><svg class="i"><use href="#pause"/></svg></button>
        <button title="Stop"><svg class="i"><use href="#stop"/></svg></button>
        <span class="spacer"></span>
        <button class="quick" title="Search"><svg class="i"><use href="#search"/></svg></button>
        <i class="grip"></i>
        <span class="gap"></span>
        <button title="Open perspective"><svg class="i"><use href="#persp"/></svg></button>
        <i class="sep"></i>
        <button title="Back"><svg class="i"><use href="#back"/></svg></button><button class="dd" title="Back history"></button>
        <button title="Forward"><svg class="i"><use href="#fwd"/></svg></button><button class="dd dim" title="Forward history"></button>
        <i class="sep"></i>
        <button class="on" title="EE"><svg class="i"><use href="#ee"/></svg></button>
        <button title="Disconnect"><svg class="i"><use href="#nox"/></svg></button>
        <i class="sep"></i>
        <button title="Home"><svg class="i"><use href="#home"/></svg></button>
        <button title="Components"><svg class="i"><use href="#blocks"/></svg></button>
    </div>

    <main class="workbench">
        <div class="trim">
            <i class="trim-grip"></i>
            <button title="Restore"><svg class="i"><use href="#restore"/></svg></button>
            <button title="Outline"><svg class="i"><use href="#notes"/></svg></button>
            <button title="Mappings"><svg class="i"><use href="#pair"/></svg></button>
            <button title="Tasks"><svg class="i"><use href="#checks"/></svg></button>
            <button title="Launch"><svg class="i"><use href="#rocket"/></svg></button>
            <button title="Properties"><svg class="i"><use href="#props"/></svg></button>
        </div>

        <section class="panel model-view">
            <div class="tabs">
                <div class="tab"><svg class="i"><use href="#hier"/></svg><span>*Model View demo (-) @ HEAD</span><button class="x" aria-label="Close tab"></button></div>
                <span class="spacer"></span>
                <button class="min" title="Minimize"></button><button class="max" title="Maximize"></button>
            </div>
            <div class="toolbar tree-toolbar">
                <button title="Hierarchy"><svg class="i"><use href="#hier"/></svg></button>
                <button title="Collapse"><svg class="i"><use href="#collapse"/></svg></button>
                <button title="Expand"><svg class="i"><use href="#expand"/></svg></button>
                <button title="Pin"><svg class="i"><use href="#pinwin"/></svg></button>
                <button title="Back"><svg class="i"><use href="#back"/></svg></button>
                <button title="Forward"><svg class="i"><use href="#fwd"/></svg></button>
                <button title="Link with editor"><svg class="i"><use href="#sync"/></svg></button>
                <button class="on" title="Flat"><svg class="i"><use href="#flat"/></svg></button>
                <button title="Tree"><svg class="i"><use href="#greentree"/></svg></button>
                <span class="gap"></span>
                <button title="Filter"><svg class="i"><use href="#filter"/></svg></button>
                <button title="View menu"><svg class="i"><use href="#kebab"/></svg></button>
            </div>
            <div class="tree-row">
                <div class="gutter">
                    <span class="mark first">Δ</span>
                    <span class="mark active">Δ</span>
                </div>
                <div class="tree-box">
                    <div class="tree-scroll">
                    <ul class="tree">
                        <li class="d2 changed"><button class="tw"></button><i></i><svg><use href="#vpoint"/></svg><span>Secured Onboard Communication (SecOc)</span></li>
                        <li class="d2 ref"><button class="tw"></button><i></i><svg><use href="#pkg"/></svg><span>»Calibration data types</span></li>
                        <li class="d2 ref"><button class="tw"></button><i></i><svg><use href="#pkg"/></svg><span>»Diagnostics</span></li>
                        <li class="d2 ref"><button class="tw"></button><i></i><svg><use href="#pkg"/></svg><span>»SOA and Ethernet</span></li>
                        <li class="d1 ref"><button class="tw"></button><i></i><svg><use href="#pkg"/></svg><span>»AUTOSAR Combined Systems</span></li>
                        <li class="d1 ref"><button class="tw"></button><i></i><svg><use href="#pkg"/></svg><span>»AUTOSAR Library</span></li>
                        <li class="d0 ref"><button class="tw"></button><i></i><svg><use href="#pkg"/></svg><span>»Functional Safety</span></li>
                        <li class="d0 ref"><button class="tw"></button><i></i><svg><use href="#pkg"/></svg><span>»ReqIF</span></li>
                        <li class="d0 ref"><button class="tw"></button><i></i><svg><use href="#pkg"/></svg><span>»Review and Vote</span></li>
                        <li class="d0 ref"><button class="tw"></button><i></i><svg><use href="#pkg"/></svg><span>»Systems Engineering</span></li>
                        <li class="d0 ref"><button class="tw"></button><i></i><svg><use href="#pkg"/></svg><span>»Test Engineering and Test Management</span></li>
                        <li class="d0 ref"><button class="tw open"></button><i></i><svg><use href="#pkg"/></svg><span>»Variant Management</span></li>
                        <li class="d1 changed"><button class="tw open"></button><i></i><svg><use href="#vpoint"/></svg><span>VM 01 Variation Points</span></li>
                        <li class="d2"><button class="tw open"></button><i></i><svg><use href="#goals"/></svg><span>Product Goals</span></li>
                        <li class="d3"><button class="tw open"></button><i></i><svg><use href="#bfold"/></svg><span>Customer Features</span></li>
                        <li class="d4"><b></b><i></i><svg><use href="#fdiag"/></svg><span>Customer Features</span></li>
                        <li class="d4"><button class="tw open"></button><i></i><svg><use href="#bfold"/></svg><span>1 Comfort Functions</span></li>
                        <li class="d5"><button class="tw"></button><i></i><svg><use href="#fgrid"/></svg><span>Comfort Functions - CF_11</span></li>
                        <li class="d5"><button class="tw"></button><i></i><svg><use href="#hfold"/></svg><span>Comfort Functions</span></li>
                        <li class="d5"><button class="tw open"></button><i></i><svg><use href="#fmap"/></svg><span>Customer Feature to Values Climate Display Engine</span></li>
                        <li class="d6 selected"><b></b><i></i><svg><use href="#mdiag"/></svg><span>Customer Feature to Values Climate Display Engine</span></li>
                        <li class="d6"><button class="tw open"></button><i></i><svg><use href="#elem"/></svg><span>Customer Feature Map Element4</span></li>
                        <li class="d7"><button class="tw"></button><i></i><svg><use href="#cond"/></svg><span>Customer Feature Map Condition4</span></li>
                        <li class="d6"><button class="tw"></button><i></i><svg><use href="#elem"/></svg><span>Customer Feature Map Element5</span></li>
                        <li class="d6"><button class="tw"></button><i></i><svg><use href="#elem"/></svg><span>Customer Feature Map Element6</span></li>
                        <li class="d6"><button class="tw"></button><i></i><svg><use href="#elem"/></svg><span>Customer Feature Map Element7</span></li>
                        <li class="d6"><button class="tw"></button><i></i><svg><use href="#elem"/></svg><span>Customer Feature Map Element8</span></li>
                        <li class="d6"><button class="tw"></button><i></i><svg><use href="#elem"/></svg><span>Customer Feature Map Element9</span></li>
                        <li class="d6"><button class="tw"></button><i></i><svg><use href="#elem"/></svg><span>Customer Feature Map Element10</span></li>
                        <li class="d5"><button class="tw"></button><i></i><svg><use href="#fmap"/></svg><span>Customer Feature to Values Multimedia</span></li>
                        <li class="d5 ref"><button class="tw"></button><svg><use href="#conds"/></svg><span>Conditions</span></li>
                        <li class="d4"><button class="tw open"></button><i></i><svg><use href="#bfold"/></svg><span>2 Engine</span></li>
                        <li class="d5"><button class="tw open"></button><i></i><svg><use href="#fgrid"/></svg><span>2.1 Engines - CF_21</span></li>
                        <li class="d6"><button class="tw"></button><i></i><svg><use href="#rx"/></svg><span>2.1.1 Basic - CF_12</span></li>
                        <li class="d6"><button class="tw"></button><i></i><svg><use href="#rx"/></svg><span>2.1.2 Sport - CF_14</span></li>
                        <li class="d6"><button class="tw"></button><i></i><svg><use href="#rx"/></svg><span>2.1.3 Race - CF_1</span></li>
                        <li class="d5"><button class="tw"></button><i></i><svg><use href="#hfold"/></svg><span>Engines</span></li>
                        <li class="d5 ref"><button class="tw"></button><svg><use href="#conds"/></svg><span>Conditions</span></li>
                        <li class="d2"><button class="tw"></button><i></i><svg><use href="#su"/></svg><span>System Software Architecture</span></li>
                        <li class="d2"><button class="tw"></button><i></i><svg><use href="#hw"/></svg><span>Hardware</span></li>
                        <li class="d2"><button class="tw"></button><i></i><svg><use href="#com"/></svg><span>Communication</span></li>
                        <li class="d2"><button class="tw"></button><i></i><svg><use href="#maps"/></svg><span>Mappings</span></li>
                        <li class="d2"><button class="tw"></button><i></i><svg><use href="#lib"/></svg><span>Library</span></li>
                        <li class="d2"><button class="tw open"></button><i></i><svg><use href="#plm"/></svg><span>Product Line Management</span></li>
                        <li class="d3"><button class="tw open"></button><i></i><svg><use href="#vp"/></svg><span>Variants</span></li>
                        <li class="d4"><button class="tw open"></button><i></i><svg><use href="#vp"/></svg><span>Containment Line</span></li>
                    </ul>
                    <div class="vbar"><i></i></div>
                    </div>
                    <div class="hbar"><i></i></div>
                </div>
            </div>
            <div class="tree-search">
                <div class="search-field">
                    <input type="text" value="class: interaction" aria-label="Search the model">
                    <button title="Clear"><svg class="i"><use href="#clear"/></svg></button>
                    <button title="Find"><svg class="s"><use href="#find"/></svg></button>
                    <button title="Next"><svg class="s"><use href="#down"/></svg></button>
                    <button title="Previous"><svg class="s"><use href="#up"/></svg></button>
                </div>
                <button class="locate" title="Find in tree"><svg class="i"><use href="#treefind"/></svg></button>
            </div>
        </section>

        <section class="panel editors">
            <div class="editors-head"><button class="min" title="Minimize"></button><button class="max" title="Maximize"></button></div>

            <article class="editor upper">
                <div class="tabs">
                    <div class="tab active"><svg class="i"><use href="#fdiag2"/></svg><span>Customer Features</span><button class="x" aria-label="Close tab"></button></div>
                </div>
                <div class="toolbar diagram-toolbar">
                    <button title="Export"><svg class="i"><use href="#export"/></svg></button>
                    <button title="Link"><svg class="i"><use href="#sync"/></svg></button>
                    <button title="Pin"><svg class="i"><use href="#pinwin"/></svg></button>
                    <button title="Zoom in"><svg class="i"><use href="#zin"/></svg></button>
                    <button title="Zoom out"><svg class="i"><use href="#zout"/></svg></button>
                    <span class="combo zoom"><select aria-label="Zoom"><option>100%</option></select><svg><use href="#chev"/></svg></span>
                    <button title="Fit"><svg class="i"><use href="#fit"/></svg></button>
                    <i class="sep"></i>
                    <button title="Snap"><svg class="i"><use href="#snap"/></svg></button>
                    <button class="on" title="Grid"><svg class="i"><use href="#gridic"/></svg></button>
                    <button title="Labels"><svg class="i"><use href="#abc"/></svg></button>
                    <button title="Resize"><svg class="i"><use href="#resize"/></svg></button>
                    <span class="combo size"><select aria-label="Grid size"><option>10 x 10</option></select><svg><use href="#chev"/></svg></span>
                    <i class="sep"></i>
                    <button title="Align left"><svg class="i"><use href="#al1"/></svg></button>
                    <button title="Align center"><svg class="i"><use href="#al2"/></svg></button>
                    <button title="Align right"><svg class="i"><use href="#al3"/></svg></button>
                    <i class="sep"></i>
                    <button title="Align top"><svg class="i"><use href="#al1"/></svg></button>
                    <button title="Align middle"><svg class="i"><use href="#al2"/></svg></button>
                    <button title="Align bottom"><svg class="i"><use href="#al3"/></svg></button>
                    <i class="sep"></i>
                    <button title="Same width"><svg class="i"><use href="#rows"/></svg></button>
                    <button title="Same height"><svg class="i"><use href="#cols"/></svg></button>
                    <i class="sep"></i>
                    <button title="Distribute"><svg class="i"><use href="#sizeh"/></svg></button>
                    <button title="Distribute down"><svg class="i"><use href="#sizev"/></svg></button>
                    <i class="sep"></i>
                    <button title="Colors"><svg class="i"><use href="#colors"/></svg></button>
                    <i class="sep"></i>
                    <button title="Filter"><svg class="i"><use href="#filter"/></svg></button>
                    <button title="Hide edges"><svg class="i"><use href="#pct"/></svg></button>
                    <button title="Hide nodes"><svg class="i"><use href="#pct2"/></svg></button>
                    <button title="Branch"><svg class="i"><use href="#branch"/></svg></button>
                    <button title="Swap"><svg class="i"><use href="#swap"/></svg></button>
                    <button title="Ports"><svg class="i"><use href="#ruler3"/></svg></button><button class="dd" title="Ports menu"></button>
                    <i class="sep"></i>
                    <button title="Route"><svg class="i"><use href="#route"/></svg></button><button class="dd dim" title="Route menu"></button>
                    <button title="Reroute"><svg class="i"><use href="#route2"/></svg></button>
                    <button title="Layout"><svg class="i"><use href="#route3"/></svg></button><button class="dd" title="Layout menu"></button>
                    <button title="Highlight"><svg class="i"><use href="#yel"/></svg></button>
                    <i class="sep"></i>
                    <button title="Expand all"><svg class="i"><use href="#fan"/></svg></button>
                    <button title="Expand one"><svg class="i"><use href="#fan"/></svg></button>
                    <button title="Expand back"><svg class="i"><use href="#fan"/></svg></button>
                    <i class="sep"></i>
                    <button title="Find"><svg class="i"><use href="#find"/></svg></button>
                    <i class="sep"></i>
                    <button title="Help"><svg class="i"><use href="#help"/></svg></button>
                    <button title="More"><svg class="i"><use href="#kebab"/></svg></button>
                </div>
                <div class="editor-body">
                    <div class="canvas-area">
                        <div class="canvas-main ruled">
                            <i class="corner"></i><i class="ruler-x"></i><i class="ruler-y"></i>
                            <div class="canvas grid">
                                <svg class="feature-diagram" width="1027" height="326" viewBox="0 0 1027 326">
                                    <defs>
                                        <marker id="open" viewBox="0 0 8 8" refX="7" refY="4" markerWidth="8" markerHeight="8" markerUnits="userSpaceOnUse" orient="auto"><path d="M1 1l6 3-6 3" fill="none" stroke="#000" stroke-width="1.5"/></marker>
                                        <marker id="gopen" viewBox="0 0 8 8" refX="7" refY="4" markerWidth="8" markerHeight="8" markerUnits="userSpaceOnUse" orient="auto"><path d="M1 1l6 3-6 3z" fill="#ccc" stroke="#999"/></marker>
                                    </defs>
                                    <g class="edge must">
                                        <path d="M419 44V75H127V166"/><path d="M444 44V166"/>
                                    </g>
                                    <g class="edge">
                                        <path class="plain" d="M469 44V75H636V100"/><path d="M636 116V137H827V166"/>
                                        <path class="plain" d="M127 182V200M444 185V200M827 183V208"/>
                                        <path d="M119 216V233H69V258"/><path d="M136 216V233H177V258"/>
                                        <path d="M427 216V233H311V258"/><path d="M444 216V258"/><path d="M461 216V233H577V258"/>
                                        <path d="M815 225V237H773V258"/><path d="M831 225V237H869V258"/>
                                    </g>
                                    <g class="edge-label">
                                        <rect x="252" y="54" width="42" height="11"/><text x="254" y="62">Must Use</text>
                                        <rect x="437" y="106" width="42" height="11"/><text x="438" y="115">Must Use</text>
                                    </g>
                                    <g class="root"><rect x="369" y="25" width="159" height="19"/><text x="440" y="38">Comfort Functions</text></g>
                                    <g class="group">
                                        <rect x="594" y="100" width="83" height="16"/><text x="636" y="112">Must Use</text>
                                        <rect x="86" y="200" width="83" height="16"/><text x="127" y="212">Req Xor</text>
                                        <rect x="402" y="200" width="84" height="16"/><text x="443" y="212">Req Xor</text>
                                        <rect x="785" y="208" width="84" height="16"/><text x="826" y="220">Req Xor</text>
                                    </g>
                                    <g class="feature">
                                        <rect x="86" y="166" width="83" height="16"/><text x="119" y="179">Climate</text>
                                        <rect x="394" y="166" width="109" height="19"/><text x="440" y="179">Multimedia</text>
                                        <rect x="785" y="166" width="84" height="16"/><text x="819" y="179">Display</text>
                                        <rect x="27" y="258" width="84" height="19"/><text x="60" y="271">2-Zones</text>
                                        <rect x="135" y="258" width="84" height="19"/><text x="169" y="271">3-Zones</text>
                                        <rect x="269" y="258" width="83" height="16"/><text x="301" y="271">Radio</text>
                                        <rect x="377" y="258" width="118" height="19"/><text x="428" y="271">Radio+Navi</text>
                                        <rect x="519" y="258" width="159" height="19"/><text x="590" y="271">Radio+Navi+Phone</text>
                                        <rect x="694" y="258" width="134" height="19"/><text x="752" y="271">One Big Screen</text>
                                        <rect x="835" y="258" width="168" height="19"/><text x="912" y="271">Two Small Screens</text>
                                    </g>
                                    <use href="#fgrid" x="512" y="27" width="14" height="14"/>
                                    <g class="soft">
                                        <use href="#fgrid" x="153" y="167" width="14" height="14"/>
                                        <use href="#fgrid" x="487" y="167" width="14" height="14"/>
                                        <use href="#fgrid" x="853" y="167" width="14" height="14"/>
                                    </g>
                                    <use href="#rx" x="95" y="260" width="14" height="14"/>
                                    <use href="#rx" x="203" y="260" width="14" height="14"/>
                                    <use href="#rx" x="336" y="260" width="14" height="14"/>
                                    <use href="#rx" x="479" y="260" width="14" height="14"/>
                                    <use href="#rx" x="662" y="260" width="14" height="14"/>
                                    <use href="#rx" x="812" y="260" width="14" height="14"/>
                                    <use href="#rx" x="987" y="260" width="14" height="14"/>
                                </svg>
                            </div>
                        </div>
                        <div class="vbar"><i></i></div>
                        <div class="hbar"><i></i></div>
                    </div>
                    <aside class="palette">
                        <div class="palette-head"><svg class="i"><use href="#palic"/></svg><span>Palette</span><button aria-label="Hide palette"><svg class="hide"><use href="#hide"/></svg></button></div>
                        <div class="palette-items tools">
                            <button class="current"><svg class="i"><use href="#cursor"/></svg>Select</button>
                            <button><svg class="i"><use href="#marq"/></svg>Marquee</button>
                            <button><svg class="i"><use href="#hand"/></svg>Scroll Diagram</button>
                            <button><svg class="i"><use href="#prock"/></svg>Palette Search</button>
                            <button><svg class="i"><use href="#pfilt"/></svg>Palette Filter</button>
                        </div>
                        <button class="drawer"><svg class="i"><use href="#fold"/></svg>Documentation</button>
                        <button class="drawer open focus"><svg class="i"><use href="#fold"/></svg>Variant Elements<svg class="pin"><use href="#pin"/></svg></button>
                        <div class="palette-items fill">
                            <button><svg class="i"><use href="#set"/></svg>Set</button>
                            <button><svg class="i"><use href="#cspace"/></svg>Concept Space</button>
                            <button><svg class="i"><use href="#ctemp"/></svg>Concept Template</button>
                            <button><svg class="i"><use href="#bulb"/></svg>Equipment Template</button>
                            <button><svg class="i"><use href="#alt"/></svg>Alternative</button>
                            <button><svg class="i"><use href="#avar"/></svg>Architecture Variant</button>
                        </div>
                        <button class="drawer"><svg class="i"><use href="#fold"/></svg>Variant Conditions</button>
                    </aside>
                </div>
            </article>

            <article class="editor lower">
                <div class="tabs">
                    <div class="tab"><svg class="i"><use href="#mdiag2"/></svg><span>Customer Feature to Values Climate Display Engine</span><button class="x" aria-label="Close tab"></button></div>
                </div>
                <div class="toolbar diagram-toolbar inactive">
                    <button title="Export"><svg class="i"><use href="#export"/></svg></button>
                    <button title="Link"><svg class="i"><use href="#sync"/></svg></button>
                    <button title="Pin"><svg class="i"><use href="#pinwin"/></svg></button>
                    <button title="Zoom in"><svg class="i"><use href="#zin"/></svg></button>
                    <button title="Zoom out"><svg class="i"><use href="#zout"/></svg></button>
                    <span class="combo zoom"><select aria-label="Zoom"><option>75%</option></select><svg><use href="#chev"/></svg></span>
                    <button title="Fit"><svg class="i"><use href="#fit"/></svg></button>
                    <i class="sep"></i>
                    <button title="Snap"><svg class="i"><use href="#snap"/></svg></button>
                    <button title="Grid"><svg class="i"><use href="#gridic"/></svg></button>
                    <button title="Labels"><svg class="i"><use href="#abc"/></svg></button>
                    <button title="Resize"><svg class="i"><use href="#resize"/></svg></button>
                    <span class="combo size"><select aria-label="Grid size"><option>10 x 10</option></select><svg><use href="#chev"/></svg></span>
                    <i class="sep"></i>
                    <button title="Align left"><svg class="i"><use href="#al1"/></svg></button>
                    <button title="Align center"><svg class="i"><use href="#al2"/></svg></button>
                    <button title="Align right"><svg class="i"><use href="#al3"/></svg></button>
                    <i class="sep"></i>
                    <button title="Align top"><svg class="i"><use href="#al1"/></svg></button>
                    <button title="Align middle"><svg class="i"><use href="#al2"/></svg></button>
                    <button title="Align bottom"><svg class="i"><use href="#al3"/></svg></button>
                    <i class="sep"></i>
                    <button title="Same width"><svg class="i"><use href="#rows"/></svg></button>
                    <button title="Same height"><svg class="i"><use href="#cols"/></svg></button>
                    <i class="sep"></i>
                    <button title="Distribute"><svg class="i"><use href="#sizeh"/></svg></button>
                    <button title="Distribute down"><svg class="i"><use href="#sizev"/></svg></button>
                    <i class="sep"></i>
                    <button title="Colors"><svg class="i"><use href="#colors"/></svg></button>
                    <i class="sep"></i>
                    <button title="Filter"><svg class="i"><use href="#filter"/></svg></button>
                    <button title="Hide edges"><svg class="i"><use href="#pct"/></svg></button>
                    <button title="Hide nodes"><svg class="i"><use href="#pct2"/></svg></button>
                    <button title="Branch"><svg class="i"><use href="#branch"/></svg></button>
                    <button title="Swap"><svg class="i"><use href="#swap"/></svg></button>
                    <button title="Ports"><svg class="i"><use href="#ruler3"/></svg></button><button class="dd" title="Ports menu"></button>
                    <i class="sep"></i>
                    <button title="Route"><svg class="i"><use href="#route"/></svg></button><button class="dd dim" title="Route menu"></button>
                    <button title="Reroute"><svg class="i"><use href="#route2"/></svg></button>
                    <button title="Layout"><svg class="i"><use href="#route3"/></svg></button><button class="dd" title="Layout menu"></button>
                    <button title="Highlight"><svg class="i"><use href="#yel"/></svg></button>
                    <i class="sep"></i>
                    <button title="Expand all"><svg class="i"><use href="#fan"/></svg></button>
                    <button title="Expand one"><svg class="i"><use href="#fan"/></svg></button>
                    <button title="Expand back"><svg class="i"><use href="#fan"/></svg></button>
                    <i class="sep"></i>
                    <button title="Find"><svg class="i"><use href="#find"/></svg></button>
                    <i class="sep"></i>
                    <button title="Help"><svg class="i"><use href="#help"/></svg></button>
                    <button title="More"><svg class="i"><use href="#kebab"/></svg></button>
                </div>
                <div class="editor-body">
                    <div class="canvas-area">
                        <div class="canvas-main">
                            <div class="canvas">
                                <svg class="map-diagram" width="1036" height="340" viewBox="0 0 1036 340">
                                    <defs>
                                        <marker id="solid" viewBox="0 0 6 6" refX="5" refY="3" markerWidth="6" markerHeight="6" markerUnits="userSpaceOnUse" orient="auto"><path d="M0 0l6 3-6 3z"/></marker>
                                    </defs>
                                    <g class="zone">
                                        <rect x="106" y="32" width="63" height="12"/><text x="130" y="39">2-Zones</text>
                                        <rect x="106" y="125" width="63" height="12"/><text x="130" y="133">3-Zones</text>
                                        <rect x="106" y="225" width="63" height="12"/><text x="130" y="233">Basic</text>
                                    </g>
                                    <g class="condition">
                                        <rect x="269" y="7" width="125" height="63"/><text x="275" y="18">Customer Feature Map Conditio...</text>
                                        <rect x="269" y="100" width="125" height="63"/><text x="275" y="111">Customer Feature Map Conditio...</text>
                                        <rect x="269" y="200" width="125" height="63"/><text x="275" y="211">Customer Feature Map Conditio...</text>
                                        <rect x="269" y="282" width="125" height="63"/><text x="275" y="293">Customer Feature Map Conditio...</text>
                                    </g>
                                    <g class="element">
                                        <rect x="506" y="7" width="125" height="63"/><text x="513" y="18">Customer Feature Map Element4</text>
                                        <rect x="506" y="100" width="125" height="63"/><text x="513" y="111">Customer Feature Map Element5</text>
                                        <rect x="506" y="200" width="125" height="63"/><text x="513" y="211">Customer Feature Map Element6</text>
                                        <rect x="506" y="282" width="125" height="63"/><text x="513" y="293">Customer Feature Map Element7</text>
                                    </g>
                                    <g class="package">
                                        <rect x="769" y="20" width="174" height="37"/><text x="774" y="31">2-Zone with Neck Warmer</text>
                                        <rect x="769" y="113" width="174" height="37"/><text x="774" y="124">3-zone without Neck Warmer</text>
                                        <rect class="light" x="769" y="195" width="174" height="31"/><text x="774" y="206">Engine Basic Package</text>
                                        <rect x="769" y="232" width="174" height="31"/><text x="774" y="243">Engine Basic Package</text>
                                        <rect class="light" x="769" y="275" width="174" height="38"/><text x="774" y="286">Engine Sports Package</text>
                                    </g>
                                    <g class="flow">
                                        <path d="M169 37.500H268"/><path d="M394 37.500H505"/><path d="M631 37.500H768"/>
                                        <path d="M169 130L268 132"/><path d="M394 132.500H505"/><path d="M631 132.500H768"/>
                                        <path d="M169 232.500H268"/><path d="M394 232.500H505"/><path d="M631 232L768 210"/><path d="M631 232L768 247"/>
                                        <path d="M671 306L768 291"/>
                                    </g>
                                    <g class="soft">
                                        <use href="#fgrid" x="156" y="33" width="10" height="10"/>
                                        <use href="#fgrid" x="156" y="126" width="10" height="10"/>
                                        <use href="#fgrid" x="156" y="226" width="10" height="10"/>
                                        <use href="#elem" x="621" y="8" width="10" height="10"/>
                                        <use href="#elem" x="621" y="101" width="10" height="10"/>
                                        <use href="#elem" x="621" y="201" width="10" height="10"/>
                                        <use href="#elem" x="621" y="283" width="10" height="10"/>
                                    </g>
                                    <use href="#cond" x="383" y="8" width="10" height="10"/>
                                    <use href="#cond" x="383" y="101" width="10" height="10"/>
                                    <use href="#cond" x="383" y="201" width="10" height="10"/>
                                    <use href="#cond" x="383" y="283" width="10" height="10"/>
                                    <use href="#xor" x="932" y="21" width="10" height="10"/>
                                    <use href="#xor" x="932" y="114" width="10" height="10"/>
                                    <use href="#pc" x="932" y="196" width="10" height="10"/>
                                    <use href="#xor" x="932" y="233" width="10" height="10"/>
                                    <use href="#pc" x="932" y="277" width="10" height="10"/>
                                </svg>
                            </div>
                        </div>
                        <div class="vbar"><i></i></div>
                    </div>
                    <aside class="palette">
                        <div class="palette-head"><svg class="i"><use href="#palic"/></svg><span>Palette</span><button aria-label="Hide palette"><svg class="hide"><use href="#hide"/></svg></button></div>
                        <div class="palette-items tools">
                            <button class="current"><svg class="i"><use href="#cursor"/></svg>Select</button>
                            <button><svg class="i"><use href="#marq"/></svg>Marquee</button>
                            <button><svg class="i"><use href="#hand"/></svg>Scroll Diagram</button>
                            <button><svg class="i"><use href="#prock"/></svg>Palette Search</button>
                            <button><svg class="i"><use href="#pfilt"/></svg>Palette Filter</button>
                        </div>
                        <button class="drawer"><svg class="i"><use href="#fold"/></svg>Documentation</button>
                        <button class="drawer open"><svg class="i"><use href="#fold"/></svg>Components<svg class="pin"><use href="#pin"/></svg></button>
                        <div class="palette-items fill">
                            <button class="tall"><svg class="i"><use href="#elem"/></svg>Customer Feature<br>Map Element</button>
                            <button class="tall"><svg class="i"><use href="#cond"/></svg>Customer Feature<br>Map Condition</button>
                        </div>
                        <button class="drawer"><svg class="i"><use href="#fold"/></svg>Operators</button>
                        <button class="drawer"><svg class="i"><use href="#fold"/></svg>Connections</button>
                    </aside>
                </div>
            </article>
        </section>

        <div class="trim right">
            <i class="trim-grip"></i>
            <button title="Restore"><svg class="i"><use href="#restore"/></svg></button>
            <button title="Table"><svg class="i"><use href="#table"/></svg></button>
            <button title="Checks"><svg class="i"><use href="#verify"/></svg></button>
            <button title="Files"><svg class="i"><use href="#files"/></svg></button>
            <button title="Information"><svg class="i"><use href="#info"/></svg></button>
            <button title="Trace"><svg class="i"><use href="#trace"/></svg></button>
        </div>
    </main>

    <footer class="statusbar">
        <span class="selection">1 Element selected</span>
        <div class="status-item messages"><svg class="i"><use href="#msg"/></svg><button class="tri" aria-label="Messages"></button></div>
        <div class="status-item scope"><svg class="scope-icon"><use href="#scope"/></svg><span>No active Scope</span><button class="tri" aria-label="Select scope"></button></div>
        <div class="status-item area"><span>Area of Responsibility:</span><span>-</span></div>
        <div class="status-item variant"><span>No Active Variant</span><button class="tri" aria-label="Select variant"></button></div>
        <i class="grip"></i>
        <div class="heap">2586M of 3736M</div>
        <button class="gc" title="Run garbage collection"><svg><use href="#trash"/></svg></button>
        <i class="grip"></i>
    </footer>
</body>
</html>
```
FILE: styles.css
```css
* { margin: 0; padding: 0; box-sizing: border-box; }
body { display: flex; flex-direction: column; height: 100vh; overflow: hidden; font-family: Lato, "Open Sans", sans-serif; font-size: 10px; line-height: 14px; color: #111; background: #f0f0f0; }
button, input, select { font: inherit; color: inherit; background: none; border: none; }
ul { list-style: none; }
svg { display: block; flex: none; }
.sprite { display: none; }
.i { width: 14px; height: 14px; }
.s { width: 11px; height: 11px; }
.spacer { flex: 1; }

/* Title and menu */
.titlebar { display: flex; align-items: center; height: 19px; padding: 0 2px 0 1px; background: #f3f3f3; }
.title { flex: 1; margin-left: 4px; padding-bottom: 1px; }
.window-buttons { display: flex; }
.window-buttons button { display: flex; justify-content: center; width: 38px; }
.window-buttons svg { width: 10px; height: 10px; }
.menubar { display: flex; align-items: center; gap: 11px; height: 17px; padding-left: 6px; background: #fff; border-bottom: 1px solid #e6e6e6; }

/* Toolbars */
.toolbar { display: flex; align-items: center; flex: none; }
.toolbar button { display: flex; align-items: center; justify-content: center; flex: none; width: 19px; height: 19px; }
.toolbar .on { background: #cce8ff; border: 1px solid #99d1ff; }
.toolbar .dd { width: 13px; }
.dd::before { content: ""; border: 3px solid transparent; border-top: 4px solid #333; border-bottom: 0; }
.dd.dim::before { border-top-color: #888; }
.sep { flex: none; width: 1px; height: 16px; margin: 0 3px; background: #a8a8a8; }
.grip { flex: none; width: 2px; height: 14px; margin: 0 1px; background: repeating-linear-gradient(#b4aca4 0 1px, transparent 1px 3px); }
.gap { width: 5px; }
.main-toolbar { height: 27px; padding-right: 8px; }
.toolbar .quick { margin-right: 11px; }

/* Workbench */
.workbench { display: flex; flex: 1; min-height: 0; }
.trim { display: flex; flex-direction: column; align-items: center; flex: none; width: 22px; padding-right: 4px; }
.trim button { display: flex; align-items: center; justify-content: center; width: 19px; height: 19px; }
.trim.right { padding: 0 0 0 1px; }
.trim-grip { width: 12px; height: 1px; margin: 1px 0; border-top: 1px dotted #999; }
.panel { display: flex; flex-direction: column; min-width: 0; border: 1px solid #b4b4b4; border-radius: 4px 4px 0 0; }
.model-view { flex: none; width: 23%; }
.editors { flex: 1; margin-left: 3px; padding: 0 1px 2px 2px; }

.tabs { display: flex; flex: none; height: 18px; }
.tab { display: flex; align-items: center; gap: 3px; padding: 0 5px 1px 2px; background: linear-gradient(#fff, #f0f0f0); border-top: 2px solid #666; border-right: 1px solid #a0a0a0; border-radius: 4px 0 0; }
.tab span { padding-bottom: 1px; }
.tab.active { background: linear-gradient(#d3e0ee, #99b4d1); }
.x { position: relative; width: 9px; height: 9px; margin-left: 4px; }
.x::before, .x::after { content: ""; position: absolute; top: 4px; left: -1px; width: 11px; height: 1px; background: #444; transform: rotate(45deg); }
.x::after { transform: rotate(-45deg); }
.min, .max { flex: none; width: 9px; margin: 4px 5px 0; border: 1px solid #333; background: #fff; }
.min { height: 4px; }
.max { height: 9px; border-top-width: 3px; margin-right: 8px; }
.editors-head .max { margin-right: 6px; }

/* Model tree */
.tree-toolbar { justify-content: flex-end; height: 20px; }
.tree-row { display: flex; flex: 1; min-height: 0; }
.gutter { flex: none; width: 11px; text-align: center; line-height: 15px; font-size: 9px; }
.mark { display: block; }
.first { margin-top: 226px; }
.active.mark { margin-top: 61px; background: #b5d9f5; }
.tree-box { display: flex; flex-direction: column; flex: 1; min-width: 0; margin-right: 1px; border: 1px solid #8a8a8a; }
.tree-scroll { display: flex; flex: 1; min-height: 0; }
.tree { flex: 1; min-width: 0; overflow: hidden; background: #fff; }
.tree li { display: flex; align-items: center; height: 15px; white-space: nowrap; }
.tree span { padding-bottom: 1px; }
.tree svg { width: 14px; height: 13px; margin: 0 3px 0 2px; }
.tree i { flex: none; width: 13px; margin-left: 2px; border-top: 1px dotted #999; }
.tree b { flex: none; width: 12px; }
.tree .ref { color: #808080; }
.tw { display: flex; align-items: center; justify-content: center; flex: none; width: 12px; height: 15px; }
.tw::before { content: ""; width: 5px; height: 5px; border: solid #888; border-width: 1px 1px 0 0; transform: rotate(45deg); }
.tw.open::before { width: 6px; height: 6px; border-color: #333; border-width: 0 2px 2px 0; }
.changed i { position: relative; }
.changed i::after { content: ""; position: absolute; top: -8px; right: 2px; width: 6px; height: 6px; border-radius: 50%; background: #18aef5; }
.d0 { padding-left: 27px; }
.d1 { padding-left: 40px; }
.d2 { padding-left: 54px; }
.d3 { padding-left: 67px; }
.d4 { padding-left: 80px; }
.d5 { padding-left: 94px; }
.d6 { padding-left: 107px; }
.d7 { padding-left: 120px; }
.selected span { padding-right: 60px; background: linear-gradient(#f2f2f2, #d4d4d4); outline: 1px dotted #555; outline-offset: -1px; }

.vbar { flex: none; width: 14px; display: flex; justify-content: center; background: #f0f0f0; }
.vbar i { width: 2px; background: #8a8a8a; }
.hbar { flex: none; display: flex; align-items: center; height: 13px; background: #f0f0f0; }
.hbar i { height: 2px; background: #8a8a8a; }
.tree-box .vbar i { height: 31%; margin-top: 322px; }
.tree-box .hbar i { width: 145px; margin-left: 14px; }

.tree-search { display: flex; flex: none; gap: 5px; padding: 2px 7px 3px 10px; }
.search-field { display: flex; align-items: center; flex: 1; min-width: 0; height: 19px; padding-right: 2px; background: #fff; border: 1px solid #aaa; }
.search-field input { flex: 1; min-width: 0; padding-left: 3px; outline: none; }
.search-field button { display: flex; justify-content: center; width: 16px; }
.locate { display: flex; align-items: center; justify-content: center; width: 20px; height: 20px; background: #fdfdfd; border: 1px solid #d0d0d0; border-radius: 3px; }

/* Editors */
.editors-head { display: flex; justify-content: flex-end; flex: none; height: 20px; }
.editor { display: flex; flex-direction: column; min-height: 0; border: 1px solid #a8a8a8; border-radius: 4px 4px 0 0; }
.upper { flex: 391 1 0; }
.lower { flex: 346 1 0; margin-top: 4px; }
.editor .tab { gap: 4px; }
.editor .x { margin-left: 2px; }
.diagram-toolbar { justify-content: flex-end; height: 20px; padding-right: 2px; border-top: 1px solid #b8b8b8; overflow: hidden; }
.inactive { filter: grayscale(1); }
.inactive .i, .inactive select { opacity: 0.6; }
.combo { position: relative; flex: none; height: 17px; background: #fff; border: 1px solid #b0b0b0; }
.combo select { appearance: none; width: 100%; height: 15px; padding-left: 4px; outline: none; }
.combo svg { position: absolute; top: 4px; right: 2px; width: 8px; height: 8px; pointer-events: none; }
.zoom { width: 83px; }
.size { width: 66px; border-color: #ddd; }

.editor-body { display: flex; flex: 1; min-height: 0; }
.canvas-area { flex: 1; min-width: 0; display: grid; grid-template: minmax(0, 1fr) auto / minmax(0, 1fr) 15px; }
.canvas-main { display: grid; min-width: 0; min-height: 0; }
.ruled { grid-template: 9px minmax(0, 1fr) / 10px minmax(0, 1fr); }
.corner { width: 5px; height: 2px; margin: 2px 0 0 3px; background: #f58a8a; }
.ruler-x { background: linear-gradient(#f4f4f4 0 2px, transparent 2px), repeating-linear-gradient(90deg, transparent 0 3px, #888 3px 4px, transparent 4px 11px, #aaa 11px 12px, transparent 12px 20px, #888 20px 21px, transparent 21px 25px), linear-gradient(#fff, #c4c4c4); }
.ruler-y { margin-left: 3px; background: repeating-linear-gradient(transparent 0 8px, #888 8px 9px, transparent 9px 16px, #888 16px 17px, transparent 17px 24px, #888 24px 25px), linear-gradient(90deg, #fff, #c4c4c4); }
.canvas { overflow: hidden; background: #fff; }
.grid {
    background:
        repeating-linear-gradient(90deg, transparent 0 3px, #dcdcdc 3px 4px, transparent 4px 11px, #dcdcdc 11px 12px, transparent 12px 20px, #dcdcdc 20px 21px, transparent 21px 25px),
        repeating-linear-gradient(transparent 0 8px, #dcdcdc 8px 9px, transparent 9px 16px, #dcdcdc 16px 17px, transparent 17px 24px, #dcdcdc 24px 25px),
        repeating-linear-gradient(90deg, transparent 0 7px, #f0f0f0 7px 8px, transparent 8px 15px, #f0f0f0 15px 16px, transparent 16px 24px, #f0f0f0 24px 25px),
        repeating-linear-gradient(transparent 0 4px, #f0f0f0 4px 5px, transparent 5px 12px, #f0f0f0 12px 13px, transparent 13px 20px, #f0f0f0 20px 21px, transparent 21px 25px), #fff;
}
.upper .hbar { height: 14px; }
.upper .vbar i { height: 90%; margin-top: 28px; }
.upper .hbar i { width: 74%; margin-left: 75px; }
.lower .vbar i { height: 126px; margin-top: 36px; }

/* Feature diagram */
.edge path { fill: none; stroke: #999; stroke-width: 1.5; stroke-dasharray: 5 2; marker-end: url(#gopen); }
.edge .plain { marker-end: none; }
.must path { stroke: #000; stroke-width: 2; stroke-dasharray: 4 3; marker-end: url(#open); }
.edge-label rect { fill: #fff; }
.edge-label text { font: 9px "Liberation Sans", sans-serif; }
.root text, .group text, .feature text { fill: #fff; text-anchor: middle; font-weight: 700; }
.root rect { fill: #800080; stroke: #000; stroke-dasharray: 4 2; }
.group rect { fill: #4255f5; stroke: #4a0a1a; stroke-dasharray: 4 2; }
.feature rect { fill: #8078fa; stroke: #111; stroke-dasharray: 4 2; }
.feature text { font: 700 11px "Open Sans", sans-serif; }
.soft { opacity: 0.7; }

/* Mapping diagram */
.map-diagram { margin-left: 1px; }
.map-diagram text { font: 7px "Liberation Sans", sans-serif; }
.zone rect { fill: #8078fa; }
.zone text { text-anchor: middle; }
.condition rect { fill: #9988ff; stroke: #222; }
.element rect { fill: #6f4bff; stroke: #222; }
.package rect { fill: #0099cc; stroke: #222; }
.package .light { fill: #66ccff; }
.flow path { fill: none; stroke: #222; marker-end: url(#solid); }

/* Palette */
.palette { display: flex; flex-direction: column; flex: none; width: 124px; margin-right: 1px; background: #fff; border-left: 1px solid #b0b0b0; }
.palette-head { display: flex; align-items: center; gap: 3px; flex: none; height: 20px; padding: 0 6px 0 3px; background: linear-gradient(#fff, #f3f3f3); border-bottom: 1px solid #c4c4c4; }
.palette-head span { flex: 1; }
.hide { width: 8px; height: 10px; }
.palette-items { display: flex; flex-direction: column; align-items: flex-start; gap: 2px; padding: 2px 0 0 12px; }
.tools { flex: none; height: 99px; }
.fill { flex: 1; min-height: 0; overflow: hidden; padding-top: 1px; }
.palette-items button { display: flex; align-items: center; gap: 3px; height: 17px; padding-left: 1px; text-align: left; white-space: nowrap; }
.palette-items .current { width: 67px; background: #cfe2fa; }
.palette-items .tall { height: 29px; margin-top: 2px; align-items: flex-start; line-height: 12px; }
.drawer { display: flex; align-items: center; gap: 3px; flex: none; height: 18px; margin-bottom: 1px; padding: 0 1px 0 2px; border-top: 1px solid #aaa; background: linear-gradient(#f0f0f0, #c9c9c9); }
.drawer.open { background: #f2f2f2; border-color: #e4e4e4; }
.drawer.focus { border: 1px dotted #444; }
.drawer .pin { width: 10px; height: 7px; margin-left: auto; }

/* Status bar */
.statusbar { display: flex; align-items: center; flex: none; height: 33px; padding: 0 149px 1px 3px; }
.selection { flex: 1; }
.status-item { display: flex; align-items: center; height: 18px; border-left: 1px solid #b0b0b0; }
.messages { width: 65px; padding-left: 26px; gap: 7px; }
.scope { width: 127px; padding-left: 15px; gap: 6px; }
.area { width: 128px; padding-left: 13px; gap: 8px; }
.variant { width: 136px; padding-left: 28px; gap: 8px; }
.tri { border: 4px solid transparent; border-top: 0; border-bottom: 6px solid #666; }
.scope-icon { width: 10px; height: 13px; }
.heap { width: 107px; height: 17px; margin-left: 1px; line-height: 17px; text-align: center; background: linear-gradient(90deg, #a0a0a0 70%, #e4e4e4 70%); }
.gc { width: 19px; height: 18px; display: flex; align-items: center; justify-content: center; border: 1px solid #ccc; }
.gc svg { width: 10px; height: 13px; }
```
